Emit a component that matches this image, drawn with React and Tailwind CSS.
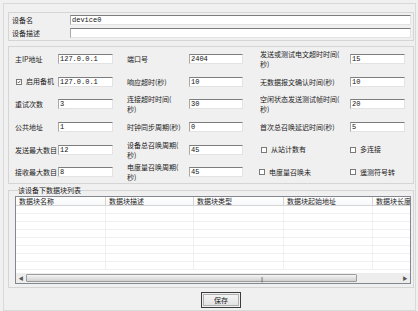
import React from 'react';

const inputCls =
  "h-[10px] w-full bg-white border border-t-[#7d7d7d] border-l-[#a8a8a8] border-r-[#e3e3e3] border-b-[#e3e3e3] px-[1px] font-['Liberation_Mono',monospace] text-[7px] leading-[8px] text-[#111] outline-none";

function Field({ value }) {
  return <input readOnly value={value} className={inputCls} />;
}

function Label({ text }) {
  const parts = text.split('|');
  return (
    <span className="leading-[10px] whitespace-nowrap">
      {parts[0]}
      {parts[1] && (
        <>
          <br />
          {parts[1]}
        </>
      )}
    </span>
  );
}

function Check({ label, checked, className = '' }) {
  return (
    <div className={`flex items-center gap-[4px] ${className}`}>
      <span className="w-[6px] h-[6px] border border-[#7a7a7a] bg-white flex items-center justify-center">
        {checked && (
          <svg width="6" height="6" viewBox="0 0 6 6">
            <polyline points="0.8,2.8 2.3,4.3 5.2,1.2" fill="none" stroke="#222" strokeWidth="1.1" />
          </svg>
        )}
      </span>
      <span className="whitespace-nowrap">{label}</span>
    </div>
  );
}

const rows = [
  [{ l: '主IP地址', v: '127.0.0.1' }, { l: '端口号', v: '2404' }, { l: '发送或测试电文超时时间(|秒)', v: '15' }],
  [{ c: '启用备机', v: '127.0.0.1' }, { l: '响应超时(秒)', v: '10' }, { l: '无数据报文确认时间(秒)', v: '10' }],
  [{ l: '重试次数', v: '3' }, { l: '连接超时时间(|秒)', v: '30' }, { l: '空闲状态发送测试帧时间(|秒)', v: '20' }],
  [{ l: '公共地址', v: '1' }, { l: '时钟同步周期(秒)', v: '0' }, { l: '首次总召唤延迟时间(秒)', v: '5' }],
  [{ l: '发送最大数目', v: '12' }, { l: '设备总召唤周期(|秒)', v: '45' }, { checks: ['从站计数有', '多连接'], off: 'ml-[1px]' }],
  [{ l: '接收最大数目', v: '8' }, { l: '电度量召唤周期(|秒)', v: '45' }, { checks: ['电度量召唤未', '遥测符号转'], off: 'ml-[-1px]' }],
];

const columns = [
  { name: '数据块名称', w: 'w-[90px]' },
  { name: '数据块描述', w: 'w-[88px]' },
  { name: '数据块类型', w: 'w-[90px]' },
  { name: '数据块起始地址', w: 'w-[89px]' },
  { name: '数据块长度', w: 'w-[60px]' },
];

export default function App() {
  return (
    <div className="w-[418px] h-[311px] bg-[#f0f0f0] pt-[3px] pl-[3px] overflow-hidden font-['Noto_Sans_CJK_SC',sans-serif] text-[7px] text-[#1c1c1c]">
      <div className="w-[413px] h-[308px] border border-[#d9d9d9] pt-[8px] pl-[4px] flex flex-col">
        {/* device name / description */}
        <div className="w-[406px] h-[29px] border border-[#d5d5d5] pl-[3px] pr-[2px] pt-[2px] flex flex-col gap-[3px]">
          <div className="flex items-center h-[10px]">
            <span className="w-[58px] shrink-0">设备名</span>
            <Field value="device0" />
          </div>
          <div className="flex items-center h-[10px]">
            <span className="w-[58px] shrink-0">设备描述</span>
            <Field value="" />
          </div>
        </div>

        {/* parameters */}
        <div className="mt-[5px] w-[406px] h-[138px] border border-[#d5d5d5] pl-[6px] pt-[1px]">
          <div className="grid grid-cols-[43px_55px_14px_62px_54px_17px_90px_55px] grid-rows-[22px_23px_22px_23px_23px_22px] items-center">
            {rows.map((row, ri) => (
              <React.Fragment key={ri}>
                {row[0].c ? (
                  <Check label={row[0].c} checked className="ml-[1px]" />
                ) : (
                  <Label text={row[0].l} />
                )}
                <Field value={row[0].v} />
                <span />
                <Label text={row[1].l} />
                <Field value={row[1].v} />
                <span />
                {row[2].checks ? (
                  <>
                    <Check label={row[2].checks[0]} className={row[2].off} />
                    <Check label={row[2].checks[1]} />
                  </>
                ) : (
                  <>
                    <Label text={row[2].l} />
                    <Field value={row[2].v} />
                  </>
                )}
              </React.Fragment>
            ))}
          </div>
        </div>

        {/* data block list */}
        <fieldset className="mt-[2px] w-[406px] h-[102px] border border-[#d5d5d5] pl-[6px] pt-[2px]">
          <legend className="ml-[3px] leading-[8px] px-0">该设备下数据块列表</legend>
          <div className="w-[396px] h-[88px] border border-[#828790] bg-white flex flex-col overflow-hidden">
            <div className="flex h-[9px] shrink-0 border-b border-[#d5d5d5] bg-gradient-to-b from-white to-[#f7f8fa]">
              {columns.map((c) => (
                <div key={c.name} className={`${c.w} shrink-0 border-r border-[#d5d5d5] pl-[3px] leading-[9px] whitespace-nowrap overflow-hidden`}>
                  {c.name}
                </div>
              ))}
            </div>
            <div className="flex-1 flex flex-col">
              {Array.from({ length: 8 }).map((_, i) => (
                <div key={i} className="flex h-[8px] border-b border-[#f0f0f0]">
                  {columns.map((c) => (
                    <div key={c.name} className={`${c.w} shrink-0 border-r border-[#f0f0f0]`} />
                  ))}
                </div>
              ))}
            </div>
            <div className="h-[10px] shrink-0 bg-[#ededed] flex items-center">
              <div className="w-[10px] h-full flex items-center justify-center text-[#555] text-[5px]">◀</div>
              <div className="w-[331px] h-[8px] rounded-[1px] border border-[#9c9c9c] bg-gradient-to-b from-[#f4f4f4] to-[#d0d0d0] flex items-center justify-center">
                <span className="text-[5px] leading-[5px] tracking-[-1px] text-[#666] ml-[140px]">|||</span>
              </div>
              <div className="flex-1" />
              <div className="w-[10px] h-full flex items-center justify-center text-[#555] text-[5px]">▶</div>
            </div>
          </div>
        </fieldset>

        <div className="mt-[4px] ml-[193px]">
          <button className="w-[40px] h-[16px] border border-[#3c3c3c] bg-[#f0f0f0] p-[1px]">
            <span className="w-full h-full border border-[#b0b0b0] bg-gradient-to-b from-[#f5f5f5] to-[#e2e2e2] flex items-center justify-center leading-[8px]">
              保存
            </span>
          </button>
        </div>
      </div>
    </div>
  );
}
